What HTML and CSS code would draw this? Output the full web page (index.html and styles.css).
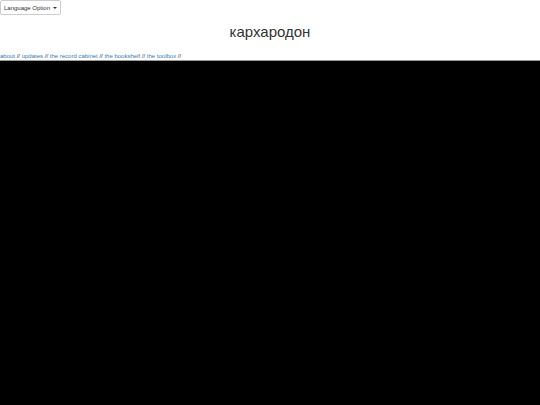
FILE: index.html
```html
<!DOCTYPE html>
<html>
<head>
<meta charset="utf-8">
<link rel="stylesheet" href="styles.css">
</head>
<body>
<div class="top">
  <button class="lang">Language Option <span class="caret"></span></button>
</div>
<h1 class="title">кархародон</h1>
<nav class="links"><a href="#">about</a> // <a href="#">updates</a> // <a href="#">the record cabinet</a> // <a href="#">the bookshelf</a> // <a href="#">the toolbox</a> //</nav>
<div class="stage"></div>
</body>
</html>
```
FILE: styles.css
```css
html, body { margin: 0; padding: 0; height: 100%; }
body {
  font-family: "Liberation Sans", Arial, sans-serif;
  color: #333;
  background: #fff;
  display: flex;
  flex-direction: column;
  overflow: hidden;
}
.top { height: 14px; }
.lang {
  font-family: "Liberation Sans", Arial, sans-serif;
  font-size: 6px;
  white-space: nowrap;
  color: #333;
  background: #fff;
  border: 1px solid #ccc;
  border-radius: 2px;
  height: 15px;
  width: 61px;
  padding: 0;
  margin: 0;
  display: flex;
  align-items: center;
  justify-content: center;
  gap: 3px;
}
.caret {
  display: inline-block;
  width: 0; height: 0;
  border-top: 2px solid #333;
  border-left: 2px solid transparent;
  border-right: 2px solid transparent;
}
.title {
  font-weight: normal;
  font-size: 15px;
  text-align: center;
  margin: 9px 0 0;
  line-height: 17px;
}
.links {
  font-size: 6px;
  line-height: 7px;
  margin-top: 13px;
  color: #333;
  white-space: nowrap;
}
.links a { color: #337ab7; text-decoration: none; }
.stage {
  flex: 1;
  margin-top: 0;
  background: #000;
  border-top: 1px solid #999;
}
```
